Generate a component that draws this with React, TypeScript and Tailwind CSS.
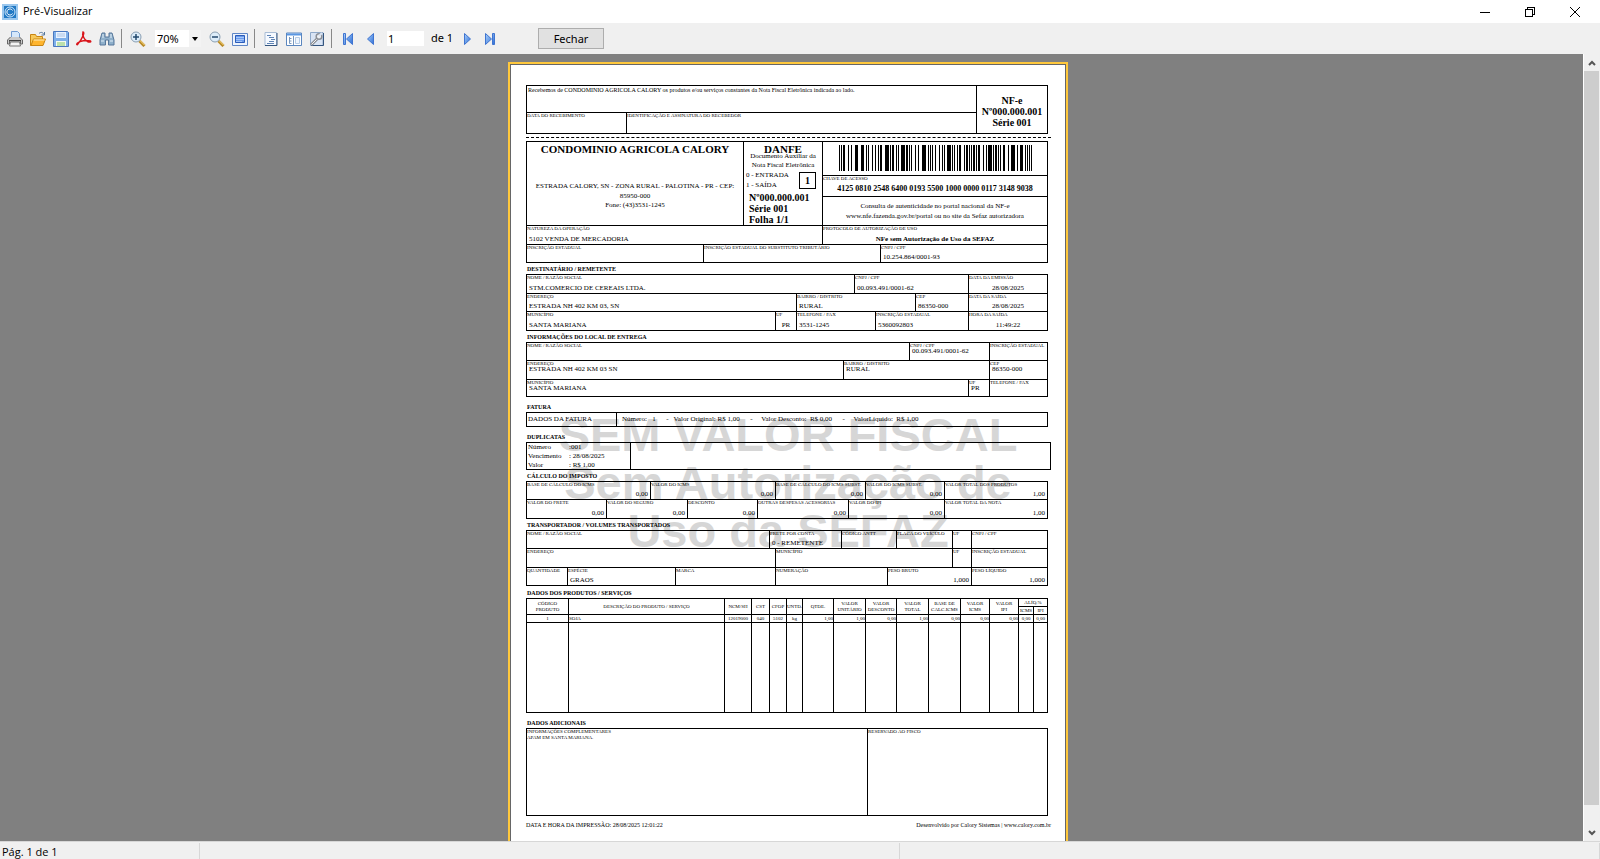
import { useState } from 'react';
import type { ReactNode } from 'react';

interface CellProps {
  label?: string;
  value?: ReactNode;
  className?: string;
  align?: 'left' | 'center' | 'right';
  high?: boolean;
}

// One field of the form: small caption on top, value at the bottom
function Cell({ label, value, className = 'flex-1', align = 'left', high }: CellProps) {
  const alignClass = align === 'right' ? 'text-right' : align === 'center' ? 'text-center' : 'text-left';
  return (
    <div className={`flex min-w-0 flex-col border-l border-b border-black whitespace-nowrap ${high ? '' : 'justify-between'} ${className}`}>
      <span className={`text-[5px] ${high ? 'leading-[5px]' : 'leading-[6px]'}`}>{label}</span>
      {value && <span className={`px-[2px] text-[7px] ${high ? 'leading-[7px]' : 'leading-[9px]'} ${alignClass}`}>{value}</span>}
    </div>
  );
}

function Box({ children, className = '' }: { children: ReactNode; className?: string }) {
  return <div className={`flex flex-col border-t border-r border-black ${className}`}>{children}</div>;
}

function Title({ children, className = 'h-[11px]' }: { children: ReactNode; className?: string }) {
  return <h2 className={`flex items-end pb-px pl-px text-[6px] leading-[8px] font-bold ${className}`}>{children}</h2>;
}

// alternating bar / gap widths
const runs =
  '11112312133332111312121123411122111241211113121342111112131211124111121123112111112111231211411121111223124212321111111';

function Barcode() {
  let x = 0;
  const bars: { x: number; w: number }[] = [];
  runs.split('').forEach((r, i) => {
    if (i % 2 === 0) bars.push({ x, w: Number(r) });
    x += Number(r);
  });
  return (
    <svg viewBox={`0 0 ${x} 26`} preserveAspectRatio="none" shapeRendering="crispEdges" className="mx-auto mt-[3px] h-[26px] w-[193px]">
      {bars.map((b) => (
        <rect key={b.x} x={b.x} y="0" width={b.w} height="26" />
      ))}
    </svg>
  );
}

const columns = [
  { name: 'CÓDIGO PRODUTO', value: '1', width: 'w-[42px]', align: 'text-center' },
  { name: 'DESCRIÇÃO DO PRODUTO / SERVIÇO', value: 'SOJA', width: 'w-[156px]', align: 'text-left' },
  { name: 'NCM/SH', value: '12019000', width: 'w-[27px]', align: 'text-center' },
  { name: 'CST', value: '040', width: 'w-[18px]', align: 'text-center' },
  { name: 'CFOP', value: '5102', width: 'w-[17px]', align: 'text-center' },
  { name: 'UNTD.', value: 'kg', width: 'w-[16px]', align: 'text-center' },
  { name: 'QTDE.', value: '1,00', width: 'w-[31px]', align: 'text-right' },
  { name: 'VALOR UNITÁRIO', value: '1,00', width: 'w-[32px]', align: 'text-right' },
  { name: 'VALOR DESCONTO', value: '0,00', width: 'w-[31px]', align: 'text-right' },
  { name: 'VALOR TOTAL', value: '1,00', width: 'w-[32px]', align: 'text-right' },
  { name: 'BASE DE CALC.ICMS', value: '0,00', width: 'w-[32px]', align: 'text-right' },
  { name: 'VALOR ICMS', value: '0,00', width: 'w-[29px]', align: 'text-right' },
  { name: 'VALOR\nIPI', value: '0,00', width: 'w-[29px]', align: 'text-right' },
];

function Products() {
  return (
    <table className="w-[522px] table-fixed border-separate border-spacing-0 border-t border-r border-black text-[5px] leading-[6px]">
      <colgroup>
        {columns.map((c) => (
          <col key={c.name} className={c.width} />
        ))}
        <col className="w-[15px]" />
        <col />
      </colgroup>
      <thead>
        <tr className="h-[8px]">
          {columns.map((c) => (
            <th key={c.name} rowSpan={2} className="border-l border-b border-black p-0 text-center font-normal whitespace-pre-line">
              {c.name}
            </th>
          ))}
          <th colSpan={2} className="border-l border-b border-black p-0 text-center font-normal">ALÍQ.%</th>
        </tr>
        <tr className="h-[8px]">
          <th className="border-l border-b border-black p-0 text-center font-normal">ICMS</th>
          <th className="border-l border-b border-black p-0 text-center font-normal">IPI</th>
        </tr>
      </thead>
      <tbody>
        <tr className="h-[8px]">
          {columns.map((c) => (
            <td key={c.name} className={`border-l border-b border-black p-0 ${c.align}`}>{c.value}</td>
          ))}
          <td className="border-l border-b border-black p-0 text-center">0,00</td>
          <td className="border-l border-b border-black p-0 text-center">0,00</td>
        </tr>
        <tr className="h-[90px]">
          {columns.map((c) => (
            <td key={c.name} className="border-l border-b border-black p-0"></td>
          ))}
          <td className="border-l border-b border-black p-0"></td>
          <td className="border-l border-b border-black p-0"></td>
        </tr>
      </tbody>
    </table>
  );
}

function Invoice() {
  return (
    <article className="relative isolate mx-auto h-[794px] w-[560px] shrink-0 border-2 border-[#ffc83c] bg-white font-['Liberation_Serif',serif] text-black">
      <div className="h-full border border-[#666] px-[15px] pt-[20px]">
        <div className="absolute inset-x-0 top-[347px] -z-10 text-center font-['Liberation_Sans',sans-serif] text-[47px] leading-[48px] font-bold text-[#d6d6d6]">
          <p>SEM VALOR FISCAL</p>
          <p>Sem Autorização de</p>
          <p>Uso da SEFAZ</p>
        </div>

        <div className="w-[522px]">
          <div className="flex h-[49px] border border-black">
            <div className="flex w-[449px] flex-col">
              <p className="h-[27px] border-b border-black pl-px text-[6px] leading-[8px]">
                Recebemos de CONDOMINIO AGRICOLA CALORY os produtos e/ou serviços constantes da Nota Fiscal Eletrônica indicada ao lado.
              </p>
              <div className="flex flex-1 text-[5px] leading-[6px]">
                <p className="w-[99px]">DATA DO RECEBIMENTO</p>
                <p className="flex-1 border-l border-black">IDENTIFICAÇÃO E ASSINATURA DO RECEBEDOR</p>
              </div>
            </div>
            <div className="flex flex-1 flex-col justify-center border-l border-black pt-[4px] text-center text-[10px] leading-[11px] font-bold">
              <p>NF-e</p>
              <p>Nº000.000.001</p>
              <p>Série 001</p>
            </div>
          </div>

          <div className="my-[3px] w-[525px] border-t border-dashed border-black"></div>

          <Box>
            <div className="flex h-[84px] border-b border-l border-black">
              <div className="w-[216px] text-center">
                <h1 className="text-[11px] leading-[14px] font-bold">CONDOMINIO AGRICOLA CALORY</h1>
                <p className="mt-[25px] text-[7px] leading-[10px]">ESTRADA CALORY, SN - ZONA RURAL - PALOTINA - PR - CEP: 85950-000</p>
                <p className="text-[7px] leading-[9px]">Fone: (43)3531-1245</p>
              </div>
              <div className="relative w-[79px] border-l border-black">
                <h2 className="h-[10px] text-center text-[11px] leading-[14px] font-bold">DANFE</h2>
                <p className="px-[2px] text-center text-[7px] leading-[9px]">Documento Auxiliar da Nota Fiscal Eletrônica</p>
                <p className="pl-[2px] text-[7px] leading-[10px]">0 - ENTRADA</p>
                <p className="pl-[2px] text-[7px] leading-[10px]">1 - SAÍDA</p>
                <span className="absolute top-[30px] right-[6px] flex size-[17px] items-center justify-center border border-black text-[10px] font-bold">1</span>
                <div className="mt-[2px] pl-[5px] text-[10px] leading-[11px] font-bold">
                  <p>Nº000.000.001</p>
                  <p>Série 001</p>
                  <p>Folha 1/1</p>
                </div>
              </div>
              <div className="flex flex-1 flex-col border-l border-black">
                <div className="h-[34px] border-b border-black">
                  <Barcode />
                </div>
                <div className="h-[21px] border-b border-black">
                  <p className="text-[5px] leading-[6px]">CHAVE DE ACESSO</p>
                  <p className="text-center text-[8px] leading-[14px] font-bold">4125 0810 2548 6400 0193 5500 1000 0000 0117 3148 9038</p>
                </div>
                <div className="flex flex-1 flex-col justify-center text-center text-[7px] leading-[10px]">
                  <p>Consulta de autenticidade no portal nacional da NF-e</p>
                  <p>www.nfe.fazenda.gov.br/portal ou no site da Sefaz autorizadora</p>
                </div>
              </div>
            </div>
            <div className="flex h-[19px]">
              <Cell label="NATUREZA DA OPERAÇÃO" value="5102 VENDA DE MERCADORIA" className="w-[296px]" />
              <Cell label="PROTOCOLO DE AUTORIZAÇÃO DE USO" value={<strong>NFe sem Autorização de Uso da SEFAZ</strong>} align="center" />
            </div>
            <div className="flex h-[18px]">
              <Cell label="INSCRIÇÃO ESTADUAL" className="w-[177px]" />
              <Cell label="INSCRIÇÃO ESTADUAL DO SUBSTITUTO TRIBUTÁRIO" className="w-[177px]" />
              <Cell label="CNPJ / CPF" value="10.254.864/0001-93" />
            </div>
          </Box>

          <Title>DESTINATÁRIO / REMETENTE</Title>
          <Box>
            <div className="flex h-[19px]">
              <Cell label="NOME / RAZÃO SOCIAL" value="STM.COMERCIO DE CEREAIS LTDA." className="w-[328px]" />
              <Cell label="CNPJ / CPF" value="00.093.491/0001-62" className="w-[114px]" />
              <Cell label="DATA DA EMISSÃO" value="28/08/2025" align="center" />
            </div>
            <div className="flex h-[18px]">
              <Cell label="ENDEREÇO" value="ESTRADA NH 402 KM 03, SN" className="w-[270px]" />
              <Cell label="BAIRRO / DISTRITO" value="RURAL" className="w-[119px]" />
              <Cell label="CEP" value="86350-000" className="w-[53px]" />
              <Cell label="DATA DA SAÍDA" value="28/08/2025" align="center" />
            </div>
            <div className="flex h-[19px]">
              <Cell label="MUNICÍPIO" value="SANTA MARIANA" className="w-[249px]" />
              <Cell label="UF" value="PR" align="center" className="w-[21px]" />
              <Cell label="TELEFONE / FAX" value="3531-1245" className="w-[79px]" />
              <Cell label="INSCRIÇÃO ESTADUAL" value="5360092803" className="w-[93px]" />
              <Cell label="HORA DA SAÍDA" value="11:49:22" align="center" />
            </div>
          </Box>

          <Title>INFORMAÇÕES DO LOCAL DE ENTREGA</Title>
          <Box>
            <div className="flex h-[18px]">
              <Cell label="NOME / RAZÃO SOCIAL" className="w-[383px]" />
              <Cell high label="CNPJ / CPF" value="00.093.491/0001-62" className="w-[80px]" />
              <Cell label="INSCRIÇÃO ESTADUAL" />
            </div>
            <div className="flex h-[19px]">
              <Cell high label="ENDEREÇO" value="ESTRADA NH 402 KM 03 SN" className="w-[317px]" />
              <Cell high label="BAIRRO / DISTRITO" value="RURAL" className="w-[146px]" />
              <Cell high label="CEP" value="86350-000" />
            </div>
            <div className="flex h-[17px]">
              <Cell high label="MUNICÍPIO" value="SANTA MARIANA" className="w-[442px]" />
              <Cell high label="UF" value="PR" className="w-[21px]" />
              <Cell label="TELEFONE / FAX" />
            </div>
          </Box>

          <Title className="h-[15px]">FATURA</Title>
          <div className="flex h-[15px] items-stretch border border-black text-[7px] leading-[13px] whitespace-pre">
            <p className="w-[89px] pl-px">DADOS DA FATURA</p>
            <p className="flex-1 border-l border-black pl-[5px]">
              {'Número:   1      -   Valor Original: R$ 1,00      -     Valor Desconto:  R$ 0,00      -     ValorLíquido:  R$ 1,00'}
            </p>
          </div>

          <Title className="h-[15px]">DUPLICATAS</Title>
          <div className="flex h-[28px] w-[525px] border border-black text-[7px] leading-[9px]">
            <dl className="grid w-[103px] grid-cols-[41px_1fr] pl-px">
              <dt>Número</dt>
              <dd>:001</dd>
              <dt>Vencimento</dt>
              <dd>: 28/08/2025</dd>
              <dt>Valor</dt>
              <dd>: R$ 1,00</dd>
            </dl>
            <div className="flex-1 border-l border-black"></div>
          </div>

          <Title>CÁLCULO DO IMPOSTO</Title>
          <Box>
            <div className="flex h-[18px]">
              <Cell label="BASE DE CÁLCULO DO ICMS" value="0,00" align="right" className="w-[124px]" />
              <Cell label="VALOR DO ICMS" value="0,00" align="right" className="w-[125px]" />
              <Cell label="BASE DE CÁLCULO DO ICMS SUBST." value="0,00" align="right" className="w-[90px]" />
              <Cell label="VALOR DO ICMS SUBST." value="0,00" align="right" className="w-[79px]" />
              <Cell label="VALOR TOTAL DOS PRODUTOS" value="1,00" align="right" />
            </div>
            <div className="flex h-[19px]">
              <Cell label="VALOR DO FRETE" value="0,00" align="right" className="w-[80px]" />
              <Cell label="VALOR DO SEGURO" value="0,00" align="right" className="w-[81px]" />
              <Cell label="DESCONTO" value="0,00" align="right" className="w-[70px]" />
              <Cell label="OUTRAS DESPESAS ACESSORIAS" value="0,00" align="right" className="w-[91px]" />
              <Cell label="VALOR DO IPI" value="0,00" align="right" className="w-[96px]" />
              <Cell label="VALOR TOTAL DA NOTA" value="1,00" align="right" />
            </div>
          </Box>

          <Title>TRANSPORTADOR / VOLUMES TRANSPORTADOS</Title>
          <Box>
            <div className="flex h-[18px]">
              <Cell label="NOME / RAZÃO SOCIAL" className="w-[243px]" />
              <Cell label="FRETE POR CONTA" value="0 - REMETENTE" className="w-[72px]" />
              <Cell label="CÓDIGO ANTT" className="w-[55px]" />
              <Cell label="PLACA DO VEÍCULO" className="w-[56px]" />
              <Cell label="UF" className="w-[19px]" />
              <Cell label="CNPJ / CPF" />
            </div>
            <div className="flex h-[19px]">
              <Cell label="ENDEREÇO" className="w-[249px]" />
              <Cell label="MUNICÍPIO" className="w-[177px]" />
              <Cell label="UF" className="w-[19px]" />
              <Cell label="INSCRIÇÃO ESTADUAL" />
            </div>
            <div className="flex h-[18px]">
              <Cell label="QUANTIDADE" className="w-[41px]" />
              <Cell label="ESPÉCIE" value="GRAOS" className="w-[108px]" />
              <Cell label="MARCA" className="w-[100px]" />
              <Cell label="NUMERAÇÃO" className="w-[112px]" />
              <Cell label="PESO BRUTO" value="1,000" align="right" className="w-[84px]" />
              <Cell label="PESO LÍQUIDO" value="1,000" align="right" />
            </div>
          </Box>

          <Title className="h-[12px]">DADOS DOS PRODUTOS / SERVIÇOS</Title>
          <Products />

          <Title className="h-[15px]">DADOS ADICIONAIS</Title>
          <div className="flex h-[88px] border border-black text-[5px] leading-[6px]">
            <div className="w-[340px]">
              <p>INFORMAÇÕES COMPLEMENTARES</p>
              <p>APAM EM SANTA MARIANA.</p>
            </div>
            <p className="flex-1 border-l border-black">RESERVADO AO FISCO</p>
          </div>

          <footer className="mt-[5px] flex w-[525px] justify-between text-[6px] leading-[8px]">
            <p>DATA E HORA DA IMPRESSÃO: 28/08/2025 12:01:22</p>
            <p>Desenvolvido por Calory Sistemas | www.calory.com.br</p>
          </footer>
        </div>
      </div>
    </article>
  );
}

function ToolButton({ label, className = 'w-[23px]', children }: { label: string; className?: string; children: ReactNode }) {
  return (
    <button type="button" aria-label={label} className={`flex h-[22px] shrink-0 items-center justify-center ${className}`}>
      <svg viewBox="0 0 16 16" className="size-4" fill="none">
        {children}
      </svg>
    </button>
  );
}

function Separator({ className = '' }: { className?: string }) {
  return <div className={`mr-[4px] h-[19px] w-px shrink-0 bg-[#888] ${className}`}></div>;
}

// Blue gradient shared by the page navigation arrows
function NavFill({ id }: { id: string }) {
  return (
    <linearGradient id={id} x1="0" y1="0" x2="1" y2="1">
      <stop offset="0" stopColor="#a9d0fb" />
      <stop offset="1" stopColor="#2f6fd6" />
    </linearGradient>
  );
}

function Toolbar() {
  const [zoom, setZoom] = useState('70%');
  const [page, setPage] = useState('1');

  return (
    <div className="flex h-[31px] shrink-0 items-center bg-[#f0f0f0] pl-[3px] font-['Noto_Sans',sans-serif] text-[11px] text-black">
      <ToolButton label="Imprimir">
        <path d="M4.500.500h6l2 2V7h-8z" fill="#d6e8fb" stroke="#6f9bd2" />
        <path d="M3.500 6 .5 9v4h2v-3h11v3h2V9l-3-3" fill="#c9c9c9" stroke="#666" />
        <path d="M2 9.500h12" stroke="#3f3f3f" />
        <path d="M3.500 11h9l1 4h-11z" fill="#f4f4f4" stroke="#777" />
      </ToolButton>
      <ToolButton label="Abrir">
        <path d="M.5 14.500v-11h5l1 2h6v9z" fill="#f7c95a" stroke="#c98512" />
        <path d="m1 14.500 2.500-6.500h12l-2.500 6.500z" fill="#ffb52e" stroke="#c98512" />
        <path d="M3.500 9h11" stroke="#fff0bd" />
        <path d="M9 2.500c2-2 4-1 5 1m.500-2.500v3h-3" stroke="#56779c" />
      </ToolButton>
      <ToolButton label="Salvar">
        <path d="M.5.500h14l1 1v14H.500z" fill="#7fb0ea" stroke="#4a78c0" />
        <path d="M3 1h10v6H3z" fill="#eaf3ff" />
        <path d="M4 3h8M4 5h8" stroke="#a9c3e5" />
        <path d="M3 10h10v5H3z" fill="#f4fbef" />
        <path d="M4 12h8M4 14h8" stroke="#86c76a" />
      </ToolButton>
      <ToolButton label="Exportar PDF">
        <path d="M7 1c2 0 0 6-5.500 12.500-1 .5-1-.5 0-1.500C4 10 10 8.500 14.500 10c1 1-1 1.500-3 .5C8 9 6 4 7 1z" stroke="#d9151b" strokeWidth="1.500" />
      </ToolButton>
      <ToolButton label="Localizar">
        <path d="M3 2h3v4h4V2h3l2 7v5H9.500V9h-3v5H1V9z" fill="#8fb0cb" stroke="#56779a" />
        <path d="M2 10h3M11 10h3M4 3v4M12 3v4" stroke="#e1eef8" />
      </ToolButton>
      <Separator className="ml-[3px]" />
      <ToolButton label="Aumentar zoom" className="w-[24px]">
        <path d="m9.500 10 5 5" stroke="#b98a26" strokeWidth="3" />
        <path d="m10 9.500 4.500 4.500" stroke="#ffe08a" />
        <circle cx="6" cy="6" r="5" fill="#dcecf9" stroke="#8a9fb2" />
        <path d="M3 6h6M6 3v6" stroke="#23496d" strokeWidth="1.500" />
      </ToolButton>
      <div className="relative mr-[4px] ml-[5px] flex h-[17px] w-[46px] shrink-0 items-center bg-white">
        <select aria-label="Zoom" value={zoom} onChange={(e) => setZoom(e.target.value)} className="h-full w-full appearance-none bg-transparent pl-[2px] leading-[17px] outline-none">
          <option>50%</option>
          <option>70%</option>
          <option>100%</option>
        </select>
        <span className="pointer-events-none absolute inset-y-0 right-0 flex w-[12px] items-center justify-center bg-[#f3f3f3]">
          <svg viewBox="0 0 6 4" className="h-[4px] w-[6px]"><path d="M0 0h6L3 4z" /></svg>
        </span>
      </div>
      <ToolButton label="Diminuir zoom">
        <path d="m9.500 10 5 5" stroke="#b98a26" strokeWidth="3" />
        <path d="m10 9.500 4.500 4.500" stroke="#ffe08a" />
        <circle cx="6" cy="6" r="5" fill="#dcecf9" stroke="#8a9fb2" />
        <path d="M3 6h6" stroke="#23496d" strokeWidth="1.500" />
      </ToolButton>
      <ToolButton label="Tela cheia">
        <path d="M.5 2.500h15v12H.500z" fill="#eef4fd" stroke="#5f86c6" />
        <path d="M3.500 4.500h9v7h-9z" fill="#6a9bec" stroke="#2c5cb8" />
        <path d="M4 6.500h8M4 8.500h8M4 10.500h6" stroke="#a6c6f8" />
      </ToolButton>
      <Separator className="ml-[3px]" />
      <ToolButton label="Estrutura" className="w-[24px]">
        <path d="M2 1.500h11.500v13H2z" fill="#f5f9ff" stroke="#a9bdd6" />
        <path d="M14 2v12.500H2" stroke="#34557e" />
        <path d="M4 4.500h4M6 6.500h5M8 8.500h4M6 10.500h5M4 12.500h7" stroke="#5f84b5" />
      </ToolButton>
      <ToolButton label="Miniaturas" className="w-[22px]">
        <path d="M.5 2h15v12.500H.500z" fill="#fff" stroke="#5a86bf" />
        <path d="M1 3.500h14" stroke="#5a97e2" strokeWidth="2" />
        <path d="M7.500 5v9M3.500 6v6.500h2M3.500 7.500h2M3.500 10h2" stroke="#7696bd" />
        <path d="M9.500 6.500h4v6h-4z" fill="#eef5fd" stroke="#b5cbe6" />
      </ToolButton>
      <ToolButton label="Configurar página" className="w-[24px]">
        <path d="M1.500 1.500h12.500v13H1.500z" fill="#d9e4f4" stroke="#8fa9c9" />
        <path d="M14.500 2v12.500H2" stroke="#34557e" />
        <path d="m2 14 6-6" stroke="#8b8f96" strokeWidth="3" />
        <path d="m2.500 13.500 6-6" stroke="#f2f2f2" />
        <circle cx="10" cy="5.500" r="2.800" fill="#eef1f4" stroke="#8b8f96" strokeWidth="1.500" />
        <path d="m10 5 3-3" stroke="#d9e4f4" strokeWidth="2" />
      </ToolButton>
      <Separator className="ml-[2px]" />
      <ToolButton label="Primeira página">
        <NavFill id="nav-first" />
        <path d="M3.500 2.500h2v11h-2zM12.500 2.500v11l-6-5.500z" fill="url(#nav-first)" stroke="#3f74d0" />
      </ToolButton>
      <ToolButton label="Página anterior">
        <NavFill id="nav-prev" />
        <path d="M10.500 2.500v11L4.500 8z" fill="url(#nav-prev)" stroke="#3f74d0" />
      </ToolButton>
      <input
        aria-label="Página"
        value={page}
        onChange={(e) => setPage(e.target.value)}
        className="ml-[5px] h-[15px] w-[37px] shrink-0 bg-white pl-px leading-[15px] outline-none"
      />
      <span className="ml-[7px] w-[25px] whitespace-nowrap">de 1</span>
      <ToolButton label="Próxima página" className="w-[22px]">
        <NavFill id="nav-next" />
        <path d="M5.500 2.500v11l6-5.500z" fill="url(#nav-next)" stroke="#3f74d0" />
      </ToolButton>
      <ToolButton label="Última página">
        <NavFill id="nav-last" />
        <path d="M3.500 2.500v11l6-5.500zM10.500 2.500h2v11h-2z" fill="url(#nav-last)" stroke="#3f74d0" />
      </ToolButton>
      <button type="button" className="ml-[37px] h-[21px] w-[66px] shrink-0 border border-[#adadad] bg-[#e1e1e1] leading-[19px]">
        Fechar
      </button>
    </div>
  );
}

export default function App() {
  return (
    <div className="flex h-screen flex-col overflow-hidden bg-[#f0f0f0] font-['Open_Sans',sans-serif] text-[11px] text-black">
      <header className="flex h-[23px] shrink-0 items-center bg-white pl-[2px]">
        <svg viewBox="0 0 16 16" className="size-4" fill="none">
          <path d="M0 0h16v16H0z" fill="#9cc8ee" />
          <path d="M2 2h12v12H2z" fill="#2179c4" />
          <circle cx="8" cy="8" r="5" stroke="#cfe6fa" />
          <path d="M10.500 6.500a3 3 0 1 0 0 3" stroke="#fff" />
        </svg>
        <h1 className="ml-[5px] flex-1">Pré-Visualizar</h1>
        <button type="button" aria-label="Minimizar" className="flex h-full w-[45px] items-center justify-center">
          <svg viewBox="0 0 10 10" className="size-[10px]" stroke="#000" shapeRendering="crispEdges"><path d="M0 5.500h10" /></svg>
        </button>
        <button type="button" aria-label="Restaurar" className="flex h-full w-[45px] items-center justify-center">
          <svg viewBox="0 0 10 10" className="size-[10px]" fill="none" stroke="#000" shapeRendering="crispEdges"><path d="M.5 2.500h7v7h-7zM2.500 2V.500h7v7H8" /></svg>
        </button>
        <button type="button" aria-label="Fechar janela" className="mr-[2px] flex h-full w-[46px] items-center justify-center">
          <svg viewBox="0 0 10 10" className="size-[10px]" stroke="#000"><path d="m0 0 10 10M10 0 0 10" /></svg>
        </button>
      </header>

      <Toolbar />

      <div className="flex min-h-0 flex-1">
        <main className="flex flex-1 overflow-hidden bg-[#808080] pt-[8px] pr-[7px]">
          <Invoice />
        </main>
        <div className="flex w-[17px] shrink-0 flex-col border-x border-l-white border-r-[#f0f0f0]">
          <button type="button" aria-label="Rolar para cima" className="flex h-[17px] shrink-0 items-center justify-center">
            <svg viewBox="0 0 8 6" className="h-[6px] w-[8px]" fill="none" stroke="#555" strokeWidth="2"><path d="m1 5 3-3 3 3" /></svg>
          </button>
          <div className="flex-1 bg-[#cdcdcd]"></div>
          <div className="h-[19px]"></div>
          <button type="button" aria-label="Rolar para baixo" className="flex h-[17px] shrink-0 items-center justify-center">
            <svg viewBox="0 0 8 6" className="h-[6px] w-[8px]" fill="none" stroke="#555" strokeWidth="2"><path d="m1 1 3 3 3-3" /></svg>
          </button>
        </div>
      </div>

      <footer className="flex h-[18px] shrink-0 border-t border-[#d7d7d7] pt-px leading-[17px]">
        <p className="w-[200px] border-r border-[#d7d7d7] pl-[2px]">Pág. 1 de 1</p>
        <p className="w-[700px] border-r border-[#d7d7d7]"></p>
        <p className="flex-1 border-r border-[#d7d7d7]"></p>
      </footer>
    </div>
  );
}
